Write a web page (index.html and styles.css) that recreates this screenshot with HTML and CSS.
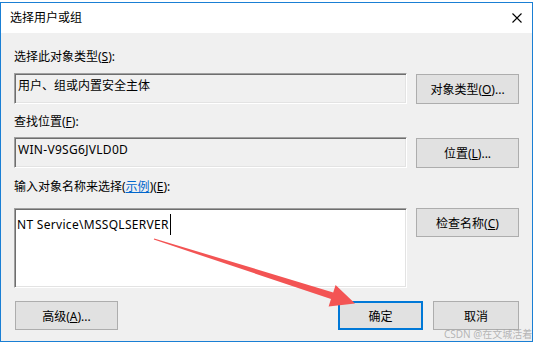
FILE: index.html
```html
<!DOCTYPE html>
<html lang="zh-CN">
<head>
  <meta charset="UTF-8" />
  <title>选择用户或组</title>
  <link rel="stylesheet" href="styles.css">
</head>
<body>

  <div class="dialog">
    <div class="titlebar">
      <span class="title">选择用户或组</span>
      <svg class="close" width="10" height="10" viewBox="0 0 10 10">
        <path d="M0.5 0.5 L9.5 9.5 M9.5 0.5 L0.5 9.5" stroke="#000" stroke-width="1.1" fill="none"/>
      </svg>
    </div>

    <div class="content">
      <div class="label first">选择此对象类型(<u>S</u>):</div>
      <div class="row r1">
        <div class="box readonly">用户、组或内置安全主体</div>
        <button class="btn">对象类型(<u>O</u>)...</button>
      </div>

      <div class="label second">查找位置(<u>F</u>):</div>
      <div class="row r2">
        <div class="box readonly latin">WIN-V9SG6JVLD0D</div>
        <button class="btn">位置(<u>L</u>)...</button>
      </div>

      <div class="label third">输入对象名称来选择(<a class="link">示例</a>)(<u>E</u>):</div>
      <div class="row r3">
        <div class="box edit latin">NT Service\MSSQLSERVER<span class="caret"></span></div>
        <button class="btn short">检查名称(<u>C</u>)</button>
      </div>

      <div class="bottom">
        <button class="btn advanced">高级(<u>A</u>)...</button>
        <div class="actions">
          <button class="btn ok">确定</button>
          <button class="btn cancel">取消</button>
        </div>
      </div>
    </div>
  </div>

  <!-- red arrow pointing to the OK button -->
  <svg class="arrow" width="534" height="345" viewBox="0 0 534 345">
    <polygon fill="#f35454" points="154.2,238.4 333.2,292.4 335.6,285 355,303.5 328.6,306.6 331,299 153.8,239.6"/>
  </svg>

  <div class="watermark">CSDN @在文城活着</div>

</body>
</html>
```

FILE: styles.css
```css
body {
  margin: 0;
  padding-top: 2px;
  background: #fff;
  font-family: "Noto Sans", "Noto Sans CJK SC", sans-serif;
  font-size: 12px;
  color: #000;
  width: 534px;
  height: 345px;
  overflow: hidden;
  position: relative;
}

.dialog {
  width: 531px;
  height: 338px;
  border: 1px solid #1a7fd4;
  background: #f0f0f0;
  display: flex;
  flex-direction: column;
}

.titlebar {
  height: 30px;
  background: #fff;
  display: flex;
  align-items: center;
  justify-content: space-between;
  padding: 0 10px 0 9px;
}

.title {
  font-size: 12px;
  line-height: 16px;
}

.close {
  display: block;
}

.content {
  padding: 0 13px;
}

.label {
  height: 16px;
  line-height: 16px;
  white-space: nowrap;
}

.label.first { margin-top: 16px; }
.label.second { margin-top: 10px; }
.label.third { margin-top: 11px; }

.link {
  color: #0066cc;
  text-decoration: underline;
}

.row {
  display: grid;
  grid-template-columns: 393px 103px;
  column-gap: 9px;
  align-items: start;
}

.r1 { margin-top: 8px; }
.r2 { margin-top: 7px; }
.r3 { margin-top: 13px; }

.box {
  box-sizing: border-box;
  border: 1px solid;
  border-color: #a0a0a0 #ffffff #ffffff #a0a0a0;
  box-shadow: inset 1px 1px 0 #6e6e6e, inset -1px -1px 0 #e3e3e3;
  line-height: 16px;
  white-space: nowrap;
}

.box.latin {
  letter-spacing: 0.3px;
}

.box.readonly {
  height: 31px;
  padding: 4px 4px 0 3px;
  background: #f0f0f0;
}

.box.edit {
  height: 80px;
  padding: 5px 2px 0 2px;
  background: #fff;
  line-height: 18px;
}

.caret {
  display: inline-block;
  width: 1px;
  height: 21px;
  background: #000;
  vertical-align: -6px;
  margin-left: 1px;
}

.btn {
  box-sizing: border-box;
  height: 30px;
  margin: 1px 0 0 0;
  padding: 0;
  border: 1px solid #adadad;
  background: #e1e1e1;
  font-family: inherit;
  font-size: 12px;
  color: #000;
  text-align: center;
}

.btn.short {
  height: 29px;
  margin-top: 0;
}

.bottom {
  margin-top: 13px;
  display: flex;
  justify-content: space-between;
}

.bottom .btn {
  height: 29px;
  margin-top: 0;
}

.advanced {
  width: 103px;
  margin-left: 1px !important;
}

.actions {
  display: flex;
  gap: 10px;
}

.ok {
  width: 85px;
  border: 2px solid #0078d7 !important;
}

.cancel {
  width: 86px;
}

.arrow {
  position: absolute;
  left: 0;
  top: 0;
  pointer-events: none;
}

.watermark {
  position: absolute;
  left: 444px;
  top: 327px;
  font-size: 10px;
  line-height: 14px;
  color: rgba(160, 160, 160, 0.75);
  white-space: nowrap;
}
```
